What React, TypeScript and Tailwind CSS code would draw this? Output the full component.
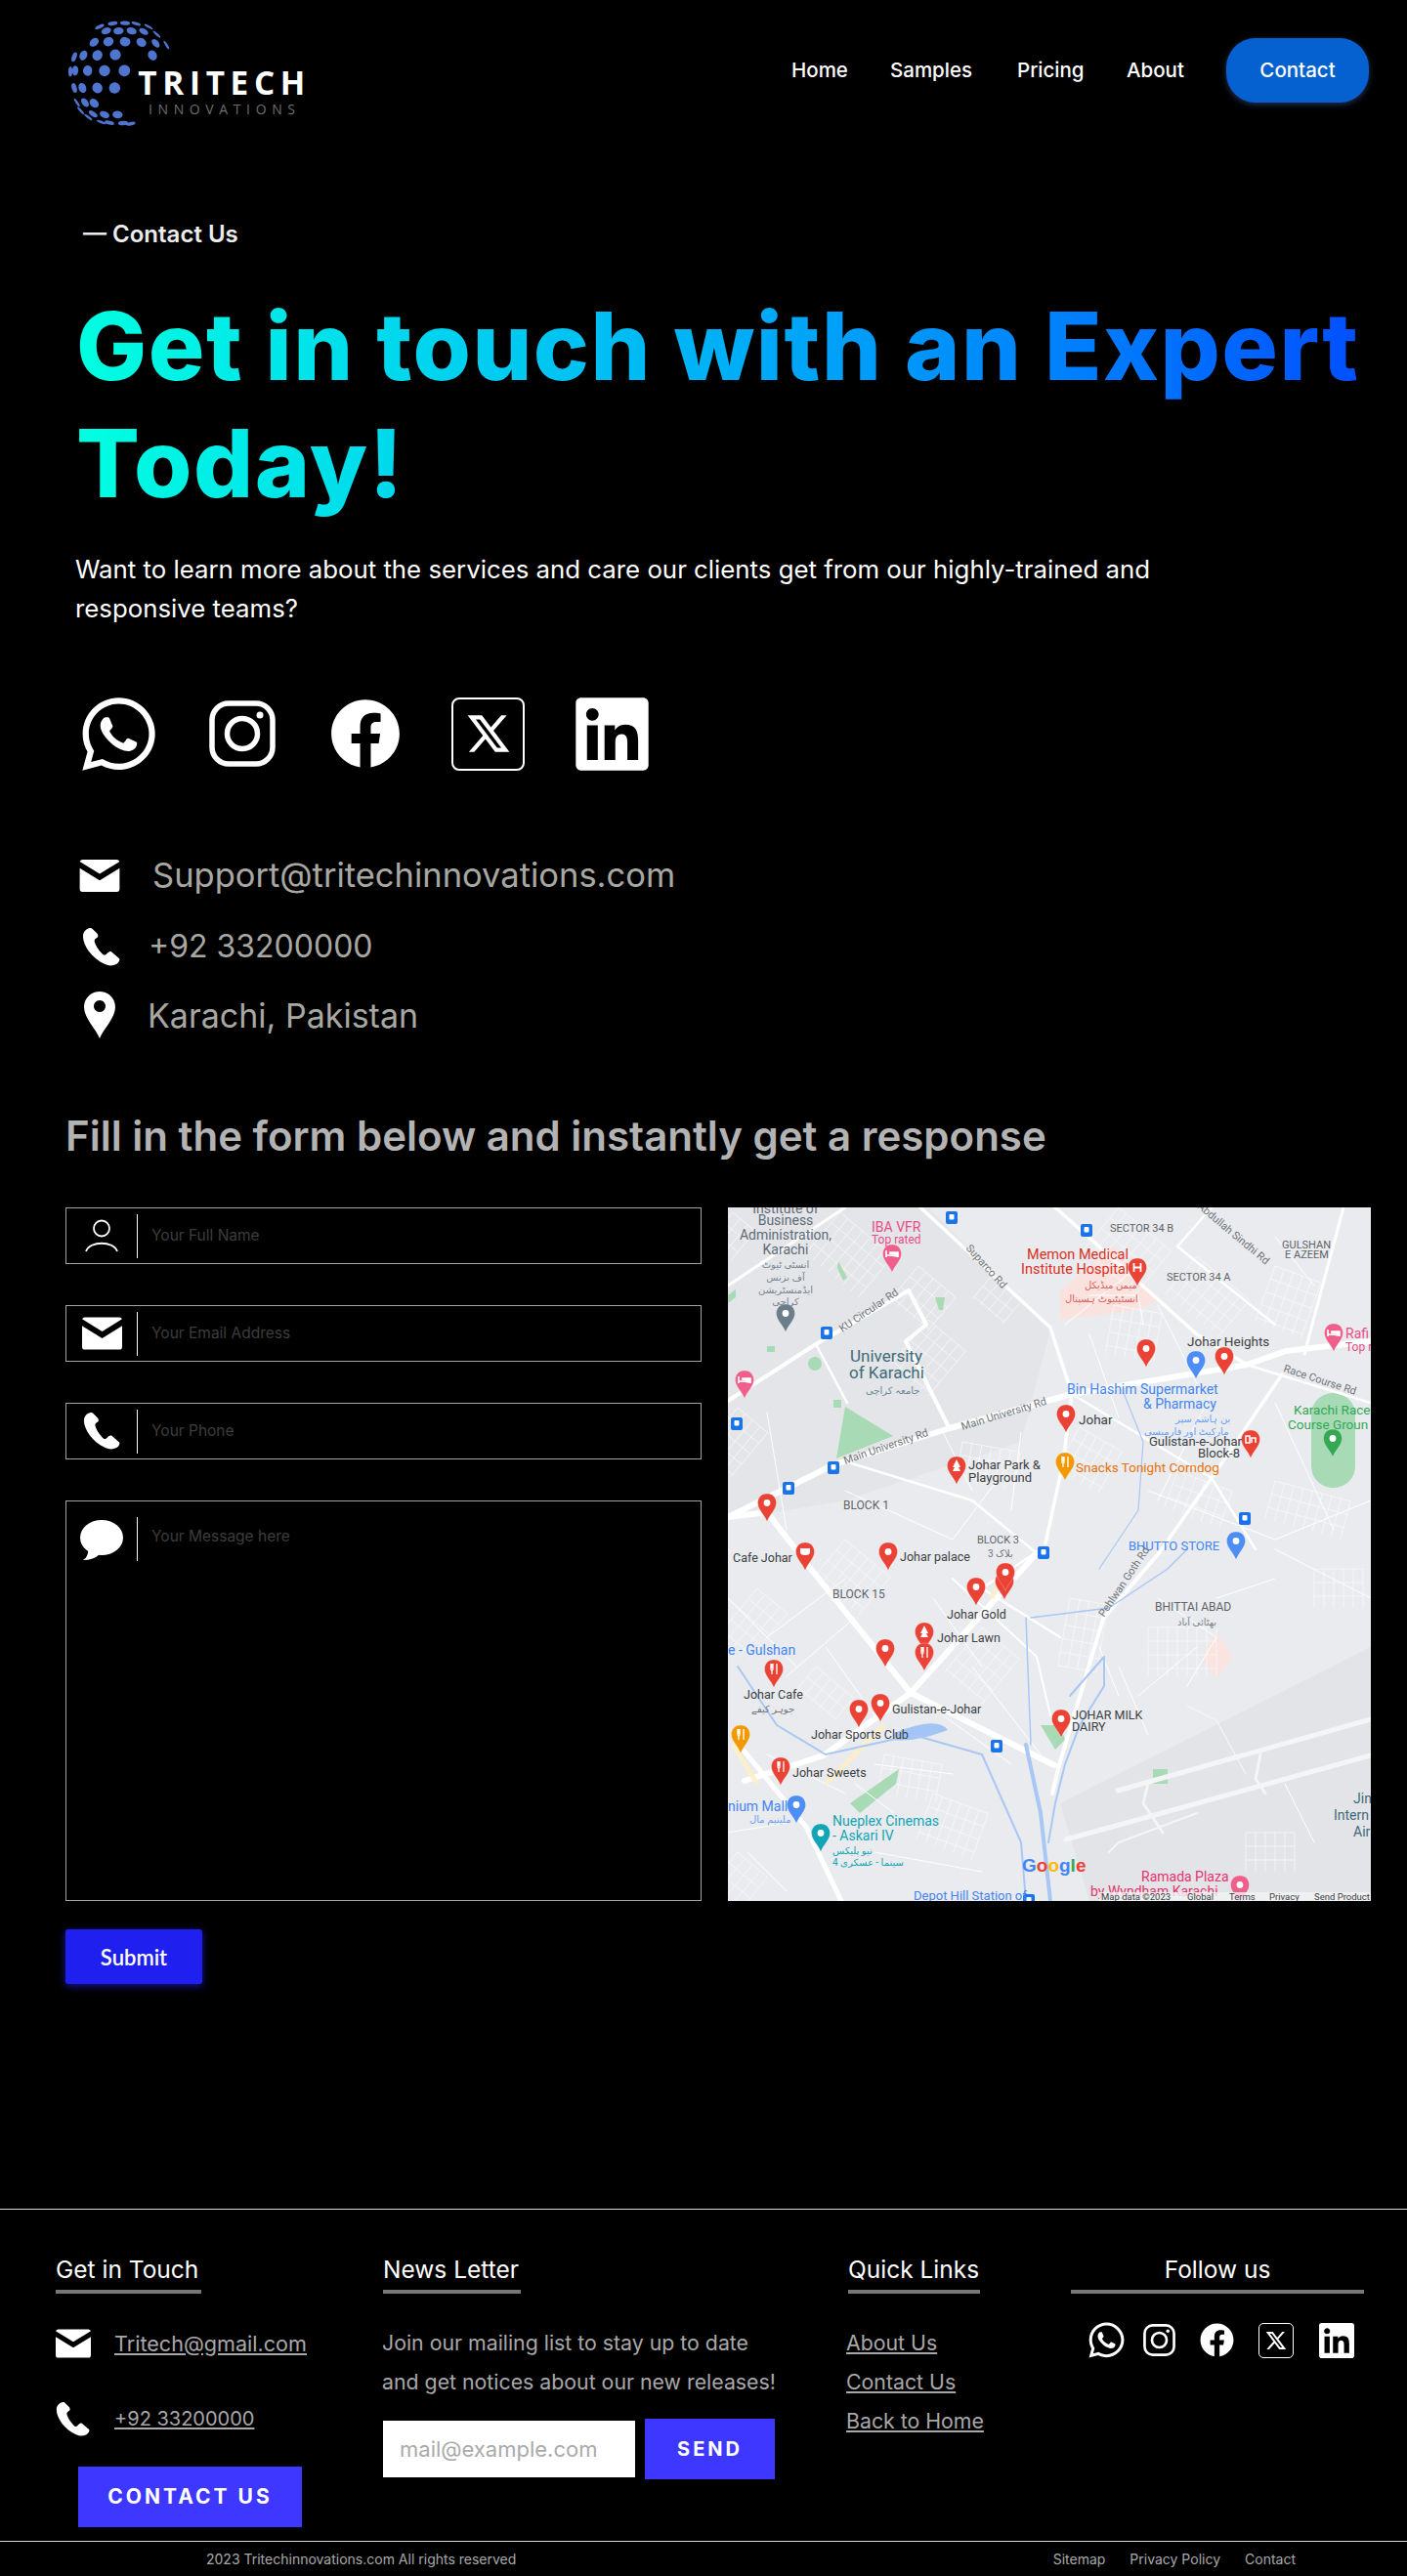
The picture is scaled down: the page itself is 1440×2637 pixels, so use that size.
import React from "react";
import { FaWhatsapp, FaFacebook, FaLinkedin } from "react-icons/fa";
import { RiTwitterXLine } from "react-icons/ri";

const globeDots = [
  [190, 42], [228, 41], [262, 43], [150, 52], [300, 52],
  [170, 65], [208, 65], [248, 65], [285, 67], [325, 75],
  [133, 100], [177, 98], [228, 98], [278, 100], [322, 103], [355, 108],
  [100, 140], [143, 140], [198, 138], [312, 140], [72, 145],
  [75, 187], [113, 187], [165, 187], [226, 187], [60, 190],
  [72, 240], [97, 240], [143, 240], [196, 240],
  [80, 285], [105, 285], [133, 287], [92, 310],
  [130, 320], [165, 322], [205, 322], [115, 330],
  [155, 345], [180, 347], [222, 348], [245, 350],
];

function Logo() {
  const cx = 215;
  const cy = 195;
  const R = 165;
  return (
    <svg width="250" height="112" viewBox="0 0 750 336" className="block">
      <g transform="translate(-48,-30)">
        {globeDots.map(([x, y], i) => {
          const dx = x - cx;
          const dy = y - cy;
          const d = Math.min(Math.sqrt(dx * dx + dy * dy) / R, 0.98);
          const angle = (Math.atan2(dy, dx) * 180) / Math.PI;
          return (
            <ellipse
              key={i}
              cx={x}
              cy={y}
              rx={18 * Math.sqrt(1 - d * d)}
              ry={18 - 3 * d}
              transform={`rotate(${angle} ${x} ${y})`}
              fill="#4f75cf"
            />
          );
        })}
        <text x="268" y="262" fill="#fff" fontFamily="'Open Sans', sans-serif" fontWeight="700" fontSize="100" letterSpacing="12" textLength="525">
          TRITECH
        </text>
        <text x="300" y="320" fill="#6f6f6f" fontFamily="'Open Sans', sans-serif" fontSize="42" textLength="450">
          INNOVATIONS
        </text>
      </g>
    </svg>
  );
}

function InstagramIcon({ className }: { className: string }) {
  return (
    <svg viewBox="0 0 68 68" className={className} fill="none" stroke="#fff" strokeWidth="5.5">
      <rect x="3" y="3" width="62" height="62" rx="17" />
      <circle cx="34" cy="34" r="15.5" />
      <circle cx="52" cy="15" r="3.5" fill="#fff" stroke="none" />
    </svg>
  );
}

function XBox({ className, size }: { className: string; size: string }) {
  return (
    <div className={`flex items-center justify-center border-white ${className}`}>
      <RiTwitterXLine className={`text-white ${size}`} />
    </div>
  );
}

function MailIcon({ className }: { className: string }) {
  return (
    <svg viewBox="0 0 42 34" className={className} fill="#fff">
      <path d="M3 0 H39 Q41 0 42 2 L21 15 L0 2 Q1 0 3 0 Z" />
      <path d="M0 9 L21 22 L42 9 V31 Q42 34 39 34 H3 Q0 34 0 31 Z" />
    </svg>
  );
}

function PhoneIcon({ className }: { className: string }) {
  return (
    <svg viewBox="0 0 40 40" className={className} fill="#fff">
      <path d="M8 0 C4 1 1 4 1 9 C1 18 10 32 24 38 C28 40 32 40 36 38 C39 36 40 33 39 32 L31 25 C29 24 28 25 26 27 C24 29 23 29 21 27 C17 23 14 18 13 14 C13 12 14 11 16 10 C17 9 17 8 16 6 L11 1 C10 0 9 0 8 0 Z" />
    </svg>
  );
}

function PinIcon({ className }: { className: string }) {
  return (
    <svg viewBox="0 0 32 48" className={className} fill="#fff">
      <path
        fillRule="evenodd"
        d="M16 0 C7 0 0 7 0 16 C0 27 12 38 16 48 C20 38 32 27 32 16 C32 7 25 0 16 0 Z M16 9 A6 6 0 1 1 15.99 9 Z"
      />
    </svg>
  );
}

function PersonIcon() {
  return (
    <svg viewBox="0 0 34 34" className="w-[34px] h-[34px]" fill="none" stroke="#fff" strokeWidth="1.8">
      <ellipse cx="17" cy="9.5" rx="8" ry="8" />
      <path d="M1 33 C 5 22, 29 22, 33 33" />
    </svg>
  );
}

function ChatIcon() {
  return (
    <svg viewBox="0 0 44 42" className="w-[44px] h-[42px]" fill="#fff">
      <ellipse cx="22" cy="18" rx="22" ry="18" />
      <path d="M8 28 Q9 38 3 41 Q14 41 20 35 Z" />
    </svg>
  );
}

const mapLabels: [string, number, number, string, number, string?, number?][] = [
  ["Institute of", 59, 6, "#5f6b76", 14, "middle"],
  ["Business", 59, 18, "#5f6b76", 14, "middle"],
  ["Administration,", 59, 33, "#5f6b76", 14, "middle"],
  ["Karachi", 59, 48, "#5f6b76", 14, "middle"],
  ["انسٹی ٹیوٹ", 59, 62, "#7a8590", 10, "middle"],
  ["آف بزنس", 59, 75, "#7a8590", 10, "middle"],
  ["ایڈمنسٹریشن", 59, 88, "#7a8590", 10, "middle"],
  ["کراچی", 59, 100, "#7a8590", 10, "middle"],
  ["IBA VFR", 147, 25, "#ea4c89", 14],
  ["Top rated", 147, 37, "#ea4c89", 12],
  ["SECTOR 34 B", 391, 25, "#5f6368", 11],
  ["GULSHAN", 567, 42, "#5f6368", 11],
  ["E AZEEM", 570, 52, "#5f6368", 11],
  ["SECTOR 34 A", 449, 75, "#5f6368", 11],
  ["Memon Medical", 306, 53, "#d93025", 14.5],
  ["Institute Hospital", 300, 68, "#d93025", 14.5],
  ["میمن میڈیکل", 365, 83, "#e06058", 10],
  ["انسٹیٹیوٹ ہسپتال", 345, 97, "#e06058", 10],
  ["Suparco Rd", 243, 42, "#70757a", 11, "start", 48],
  ["Abdullah Sindhi Rd", 480, 0, "#70757a", 11, "start", 40],
  ["KU Circular Rd", 117, 128, "#70757a", 11, "start", -34],
  ["Johar Heights", 470, 142, "#3c4043", 13.5],
  ["Rafi", 632, 134, "#ea4c89", 14],
  ["Top ra", 632, 147, "#ea4c89", 12],
  ["University", 125, 158, "#3f6b78", 17],
  ["of Karachi", 124, 175, "#3f6b78", 17],
  ["جامعہ کراچی", 141, 191, "#6d8a94", 10],
  ["Race Course Rd", 568, 168, "#70757a", 11, "start", 18],
  ["Bin Hashim Supermarket", 347, 191, "#4285f4", 14],
  ["& Pharmacy", 425, 206, "#4285f4", 14],
  ["بن ہاشم سپر", 458, 220, "#6ea0f5", 10],
  ["مارکیٹ اور فارمیسی", 426, 233, "#6ea0f5", 10],
  ["Main University Rd", 240, 228, "#70757a", 11, "start", -17],
  ["Main University Rd", 120, 263, "#70757a", 11, "start", -19],
  ["Johar", 359, 222, "#3c4043", 13.5],
  ["Karachi Race", 579, 212, "#34a853", 13.5],
  ["Course Groun", 573, 227, "#34a853", 13.5],
  ["Gulistan-e-Johar", 431, 244, "#3c4043", 13],
  ["Block-8", 481, 256, "#3c4043", 13],
  ["Johar Park &", 246, 268, "#3c4043", 13],
  ["Playground", 246, 281, "#3c4043", 13],
  ["Snacks Tonight Corndog", 356, 271, "#e8710a", 13.5],
  ["BLOCK 1", 118, 309, "#5f6368", 12],
  ["BLOCK 3", 255, 344, "#5f6368", 11],
  ["3 بلاک", 266, 358, "#70757a", 10],
  ["Cafe Johar", 5, 363, "#3c4043", 12.5],
  ["Johar palace", 176, 362, "#3c4043", 12.5],
  ["BHUTTO STORE", 410, 351, "#4285f4", 13],
  ["BLOCK 15", 107, 400, "#5f6368", 12],
  ["BHITTAI ABAD", 437, 413, "#5f6368", 12],
  ["بھٹائی آباد", 460, 428, "#80868b", 10],
  ["Pehlwan Goth Rd", 385, 420, "#70757a", 11, "start", -56],
  ["Johar Gold", 224, 421, "#3c4043", 12.5],
  ["Johar Lawn", 214, 445, "#3c4043", 12.5],
  ["e - Gulshan", 0, 458, "#4285f4", 14],
  ["Johar Cafe", 16, 503, "#3c4043", 12.5],
  ["جوہر کیفے", 24, 517, "#70757a", 10],
  ["Gulistan-e-Johar", 168, 518, "#3c4043", 12.5],
  ["JOHAR MILK", 352, 524, "#3c4043", 12.5],
  ["DAIRY", 352, 536, "#3c4043", 12.5],
  ["Johar Sports Club", 85, 544, "#3c4043", 12.5],
  ["Johar Sweets", 66, 583, "#3c4043", 12.5],
  ["nium Mall", 0, 618, "#4285f4", 14],
  ["ملینیم مال", 22, 630, "#6ea0f5", 10],
  ["Nueplex Cinemas", 107, 633, "#12a5b5", 14],
  ["- Askari IV", 107, 648, "#12a5b5", 14],
  ["نیو پلیکس", 107, 662, "#12a5b5", 10],
  ["سینما - عسکری 4", 107, 674, "#12a5b5", 10],
  ["Jin", 640, 610, "#3f6b78", 14],
  ["Intern", 620, 627, "#3f6b78", 14],
  ["Air", 640, 644, "#3f6b78", 14],
  ["Ramada Plaza", 423, 690, "#e8336d", 14],
  ["by Wyndham Karachi", 371, 705, "#e8336d", 14],
  ["Depot Hill Station of", 190, 709, "#4285f4", 13],
];

const mapPins: [number, number, string, string?][] = [
  [168, 51, "#ee5f8b", "bed"], [419, 65, "#ea4335", "H"], [59, 112, "#6b7d88"], [17, 180, "#ee5f8b", "bed"],
  [428, 148, "#ea4335"], [508, 156, "#ea4335"], [479, 160, "#4d8df5"], [620, 132, "#ee5f8b", "bed"],
  [346, 215, "#ea4335"], [234, 268, "#ea4335", "T"], [345, 264, "#f29900", "fork"], [535, 241, "#ea4335", "B"],
  [40, 306, "#ea4335"], [619, 240, "#34a853"], [79, 356, "#ea4335", "cup"], [164, 356, "#ea4335"],
  [520, 345, "#4d8df5"], [254, 392, "#ea4335"], [283, 386, "#ea4335"], [284, 377, "#ea4335"],
  [201, 438, "#ea4335", "T"], [201, 459, "#ea4335", "fork"], [161, 455, "#ea4335"], [47, 476, "#ea4335", "fork"],
  [134, 517, "#ea4335"], [156, 511, "#ea4335"], [341, 527, "#ea4335"], [13, 543, "#f29900", "fork"],
  [54, 576, "#ea4335", "fork"], [70, 615, "#4d8df5"], [95, 644, "#12a5b5"], [524, 697, "#ee5f8b"],
];

const transitStops = [
  [229, 10], [367, 23], [101, 128], [9, 221], [108, 266], [62, 287], [529, 318], [323, 353], [275, 551], [308, 709],
];

const bigRoads: [string, number][] = [
  ["0,317 107,264 227,226 352,191 531,161 571,147 658,137", 6],
  ["197,0 330,123 352,191 343,261 325,344", 3.5],
  ["0,317 40,312 80,364 187,497 334,571", 6],
  ["316,354 187,497 98,561 17,587", 6],
  ["17,557 80,634 116,710", 5],
  ["441,354 384,421 339,571 332,600", 4],
  ["441,354 495,277 567,171", 3.5],
  ["335,0 480,130 531,161", 3.5],
  ["630,0 590,150", 3],
  ["0,80 75,30 120,0", 3],
  ["0,198 90,140 185,85 203,120 182,137 227,227", 4],
  ["90,140 122,200", 2.5],
  ["495,0 460,40 560,120", 2.5],
  ["531,161 658,200", 2.5],
  ["352,191 495,277 540,350", 2.5],
  ["316,354 250,300 120,260", 2.5],
  ["230,380 316,460 330,520", 2],
  ["320,350 260,390 340,440", 2.5],
];

const minorRoads = [
  "370,90 420,90 425,120", "345,120 420,60", "370,130 400,215", "440,100 480,180", "560,30 600,80",
  "500,180 440,300", "560,200 620,330", "430,290 560,340 658,300", "560,350 658,400", "40,210 60,330",
  "120,290 230,340 290,260", "220,230 250,290", "300,230 290,310", "0,400 70,470", "40,440 120,380", "60,480 130,420",
  "100,450 150,520", "210,400 260,470", "250,470 320,560", "220,520 290,570", "380,450 400,500", "440,400 500,440 470,490",
  "420,500 480,450", "40,560 120,600", "150,570 230,580", "0,640 60,630", "130,590 170,620", "500,400 560,380",
  "400,470 430,540", "570,590 600,650", "20,660 60,700", "150,660 260,680",
];

// neighbourhood street patches: x, y, width, height, rotation
const gridPatches = [
  [115, 5, 70, 55, 40], [195, 60, 50, 45, 40], [5, 5, 30, 40, 40], [205, 115, 50, 60, 40], [10, 205, 40, 60, 40],
  [270, 70, 40, 30, 40], [400, 0, 70, 60, 40], [480, 50, 70, 50, 40], [560, 60, 50, 60, 20], [395, 100, 50, 50, 10],
  [240, 240, 60, 40, 10], [360, 225, 50, 50, 30], [460, 270, 60, 40, 20], [560, 280, 80, 40, 15], [120, 340, 60, 50, 40],
  [260, 430, 50, 60, 40], [350, 400, 40, 70, 10], [430, 430, 70, 50, 0], [600, 370, 50, 40, 0], [30, 390, 40, 60, 40],
  [160, 560, 60, 40, 10], [10, 660, 40, 40, 40], [210, 600, 60, 50, 20], [90, 470, 50, 30, 40], [530, 640, 50, 40, 0],
];

function MapPin({ x, y, color, kind }: { x: number; y: number; color: string; kind?: string }) {
  return (
    <g transform={`translate(${x},${y})`}>
      <path d="M0 -13 C 7.5 -13 9.5 -7 9.5 -3.5 C 9.5 3 3 8 0 15.5 C -3 8 -9.5 3 -9.5 -3.5 C -9.5 -7 -7.5 -13 0 -13 Z" fill={color} stroke="#fff" strokeOpacity="0.5" strokeWidth="0.5" />
      {!kind && <circle cx="0" cy="-3.5" r="3.4" fill="#fff" />}
      {kind === "H" && <path d="M-3.5 -8 V1 M3.5 -8 V1 M-3.5 -3.5 H3.5" stroke="#fff" strokeWidth="1.8" />}
      {kind === "bed" && <path d="M-6 -7 V0 M-6 -2 H6 V0 M6 -2 V-5 H-2 V-3" stroke="#fff" strokeWidth="1.6" fill="#fff" />}
      {kind === "fork" && <path d="M-3 -9 V-4 Q-3 -2 -2 -2 V2 M-2 -9 V-4 M-1 -9 V-4 Q-1 -2 -2 -2 M3 -9 V2" stroke="#fff" strokeWidth="1.3" fill="none" />}
      {kind === "T" && <path d="M0 -10 L4 -2 H2 L4 2 H-4 L-2 -2 H-4 Z" fill="#fff" />}
      {kind === "B" && <path d="M-5 0 V-7 H-1 V0 Z M1 0 V-5 H5 V0" stroke="#fff" strokeWidth="1.5" fill="none" />}
      {kind === "cup" && <path d="M-5 -7 H5 V-3 Q5 0 0 0 Q-5 0 -5 -3 Z" fill="#fff" />}
    </g>
  );
}

function StreetGrid({ x, y, w, h, r }: { x: number; y: number; w: number; h: number; r: number }) {
  const lines: string[] = [];
  for (let i = 0; i <= w; i += 10) lines.push(`M${i} 0 V${h}`);
  for (let j = 0; j <= h; j += 14) lines.push(`M0 ${j} H${w}`);
  return <path transform={`translate(${x},${y}) rotate(${r})`} d={lines.join(" ")} stroke="#f6f7f8" strokeWidth="0.8" fill="none" />;
}

function MapView() {
  return (
    <svg viewBox="0 0 658 710" className="w-[658px] h-[710px] block shrink-0" preserveAspectRatio="none">
      <rect width="658" height="710" fill="#e9ebee" />
      <path d="M0 0 H205 L330 125 L300 240 L120 300 L0 320 Z" fill="#e3e5e8" />
      <path d="M340 610 L658 450 V710 H370 Z" fill="#e2e4e7" />
      <path d="M340 85 L395 40 L440 95 L420 105 L340 115 Z" fill="#fae3df" />
      <path d="M485 460 L500 435 L517 460 L500 482 Z" fill="#fbe3e0" />
      {gridPatches.map(([x, y, w, h, r], i) => (
        <StreetGrid key={i} x={x} y={y} w={w} h={h} r={r} />
      ))}
      <path d="M120 204 L169 234 L111 257 Z" fill="#a8dab5" />
      <path d="M113 55 L122 72 L118 75 L112 62 Z" fill="#a8dab5" />
      <path d="M212 92 L222 92 L220 105 L216 105 Z" fill="#a8dab5" />
      <path d="M40 142 H48 V148 H40 Z" fill="#a8dab5" />
      <path d="M108 197 H116 V205 H108 Z" fill="#a8dab5" />
      <path d="M0 90 L8 84 L8 92 L0 98 Z" fill="#a8dab5" />
      <rect x="597" y="190" width="45" height="97" rx="22" fill="#a8dab5" />
      <path d="M125 610 L175 575 L172 590 L135 620 Z" fill="#a8dab5" />
      <path d="M435 575 H450 V590 H435 Z" fill="#a8dab5" />
      <path d="M320 530 L340 530 L345 545 L335 555 Z" fill="#a8dab5" />
      <circle cx="89" cy="160" r="7" fill="#a8dab5" />
      <path d="M170 538 Q215 520 225 535 Q190 548 170 545 Z" fill="#a3c5f5" />
      <g fill="none" stroke="#fff" strokeLinecap="round" strokeLinejoin="round">
        {minorRoads.map((p) => (
          <polyline key={p} points={p} strokeWidth="1" />
        ))}
        {bigRoads.map(([p, w]) => (
          <polyline key={p} points={p} strokeWidth={w} />
        ))}
      </g>
      <g fill="none" stroke="#fdf0c8" strokeWidth="5" opacity="0.9">
        <polyline points="285,365 270,400" />
        <polyline points="160,530 100,590" />
        <polyline points="5,550 30,590" />
      </g>
      <g fill="none" stroke="#a9c7f5" strokeLinecap="round" strokeLinejoin="round">
        <polyline points="10,470 50,530 100,560 190,540 260,560 300,650 305,710" strokeWidth="2" />
        <polyline points="305,550 320,620 330,710" strokeWidth="4" />
        <polyline points="305,420 310,550" strokeWidth="1.5" />
        <polyline points="470,350 450,370 390,410 310,420" strokeWidth="1.5" />
        <polyline points="350,500 385,460 385,490 360,530 345,570 335,610 328,650" strokeWidth="2" />
        <polyline points="405,190 425,240 420,310 380,370" strokeWidth="1.2" />
      </g>
      <g fill="none" stroke="#f4f5f6" strokeLinecap="round" strokeLinejoin="round">
        <polyline points="399,597 658,524" strokeWidth="5" />
        <polyline points="346,647 658,561" strokeWidth="5" />
        <polyline points="430,590 425,610 445,640" strokeWidth="3" />
        <polyline points="545,560 540,585 550,600" strokeWidth="3" />
        <polyline points="390,660 400,650 480,620" strokeWidth="2" />
        <polyline points="470,510 500,525 530,580" strokeWidth="1.2" />
      </g>
      {transitStops.map(([x, y], i) => (
        <g key={i}>
          <rect x={x - 6} y={y - 6} width="12" height="13" rx="2" fill="#1a73e8" />
          <rect x={x - 2.5} y={y - 3} width="5" height="5.5" rx="1" fill="#fff" />
        </g>
      ))}
      {mapPins.map(([x, y, c, k], i) => (
        <MapPin key={i} x={x} y={y} color={c} kind={k} />
      ))}
      <g fontFamily="Roboto, 'DejaVu Sans', sans-serif">
        {mapLabels.map(([t, x, y, c, s, a, r], i) => (
          <text
            key={i}
            x={x}
            y={y}
            fill={c}
            fontSize={s}
            textAnchor={(a as "middle" | "start") || "start"}
            transform={r ? `rotate(${r} ${x} ${y})` : undefined}
          >
            {t}
          </text>
        ))}
      </g>
      <text x="301" y="680" fontFamily="'Liberation Sans', sans-serif" fontSize="19" fontWeight="700">
        <tspan fill="#4285f4">G</tspan>
        <tspan fill="#ea4335">o</tspan>
        <tspan fill="#fbbc05">o</tspan>
        <tspan fill="#4285f4">g</tspan>
        <tspan fill="#34a853">l</tspan>
        <tspan fill="#ea4335">e</tspan>
      </text>
      <rect x="380" y="701" width="278" height="9" fill="#f1f3f4" opacity="0.8" />
      <g fontFamily="Roboto, sans-serif" fontSize="9.5" fill="#3c4043">
        <text x="382" y="709">Map data ©2023</text>
        <text x="470" y="709">Global</text>
        <text x="513" y="709">Terms</text>
        <text x="554" y="709">Privacy</text>
        <text x="600" y="709">Send Product</text>
      </g>
    </svg>
  );
}

function Field({ icon, placeholder, type = "text" }: { icon: React.ReactNode; placeholder: string; type?: string }) {
  return (
    <div className="flex items-center w-[651px] h-[58px] border border-[#a3a3a3]">
      <div className="flex items-center justify-center w-[72px] shrink-0">{icon}</div>
      <div className="w-px h-[45px] bg-white" />
      <input
        type={type}
        placeholder={placeholder}
        className="flex-1 ml-[14px] bg-transparent outline-none text-[15.5px] text-white placeholder:text-[#3d3d3d]"
      />
    </div>
  );
}

function FooterHeading({ children, className = "" }: { children: string; className?: string }) {
  return (
    <h3 className={`h-[41px] border-b-4 border-[#777] text-white text-[24.5px] leading-[32px] whitespace-nowrap ${className}`}>
      {children}
    </h3>
  );
}

function App() {
  return (
    <div className="bg-black w-full h-[2637px] overflow-hidden font-['Inter',sans-serif]">
      <header className="flex justify-between items-start pl-[68px] pr-[39px] pt-[20px] h-[130px]">
        <Logo />
        <nav className="flex items-center mt-[19px] text-white text-[20.5px] font-medium">
          <a className="w-[60px] whitespace-nowrap">Home</a>
          <a className="ml-[41px] w-[89px] whitespace-nowrap">Samples</a>
          <a className="ml-[41px] w-[70px] whitespace-nowrap">Pricing</a>
          <a className="ml-[42px] w-[60px] whitespace-nowrap">About</a>
          <a className="ml-[42px] flex items-center justify-center w-[146px] h-[66px] rounded-[30px] bg-[#0560d0] shadow-[0_2px_6px_rgba(80,110,200,0.45)]">
            Contact
          </a>
        </nav>
      </header>

      <main className="pl-[67px]">
        <p className="mt-[94px] ml-[18px] text-[#ececec] text-[24px] font-semibold leading-[32px] whitespace-nowrap">— Contact Us</p>
        <h1 className="mt-[38px] ml-[11px] w-[1310px] text-[96px] font-extrabold leading-[120px] tracking-[1.5px] bg-linear-to-r from-[#00ffe0] to-[#0050ff] bg-clip-text text-transparent whitespace-nowrap">
          Get in touch with an Expert
          <br />
          Today!
        </h1>
        <p className="mt-[29px] ml-[10px] w-[1200px] text-white text-[25.8px] leading-[40px] whitespace-nowrap">
          Want to learn more about the services and care our clients get from our highly-trained and
          <br />
          responsive teams?
        </p>

        <div className="flex items-center mt-[70px] ml-[12px] h-[76px]">
          <FaWhatsapp className="text-white w-[85px] h-[85px]" />
          <InstagramIcon className="ml-[50px] w-[68px] h-[68px]" />
          <FaFacebook className="ml-[56px] text-white w-[72px] h-[72px]" />
          <XBox className="ml-[52px] w-[75px] h-[75px] border-2 rounded-[8px]" size="w-[50px] h-[50px]" />
          <FaLinkedin className="ml-[52px] text-white w-[75px] h-[85px]" />
        </div>

        <div className="text-[#a8a8a3]">
          <div className="flex items-center h-[40px] mt-[87px]">
            <MailIcon className="ml-[14px] w-[42px] h-[33px]" />
            <span className="ml-[33px] text-[34.5px]">Support@tritechinnovations.com</span>
          </div>
          <div className="flex items-center h-[40px] mt-[33px]">
            <PhoneIcon className="ml-[17px] w-[39px] h-[39px]" />
            <span className="ml-[29px] text-[32px]">+92 33200000</span>
          </div>
          <div className="flex items-center h-[40px] mt-[30px]">
            <PinIcon className="ml-[19px] w-[32px] h-[48px]" />
            <span className="ml-[33px] text-[34px]">Karachi, Pakistan</span>
          </div>
        </div>

        <h2 className="mt-[81px] text-[#b3b3b3] text-[42px] font-semibold leading-[46px] whitespace-nowrap">
          Fill in the form below and instantly get a response
        </h2>

        <div className="flex mt-[50px]">
          <div className="flex flex-col gap-[42px] w-[651px]">
            <Field icon={<PersonIcon />} placeholder="Your Full Name" />
            <Field icon={<MailIcon className="w-[41px] h-[34px]" />} placeholder="Your Email Address" type="email" />
            <Field icon={<PhoneIcon className="w-[38px] h-[38px]" />} placeholder="Your Phone" />
            <div className="flex w-[651px] h-[410px] border border-[#a3a3a3]">
              <div className="flex justify-center w-[72px] shrink-0 pt-[19px]">
                <ChatIcon />
              </div>
              <div className="w-px h-[45px] mt-[16px] bg-white" />
              <textarea
                placeholder="Your Message here"
                className="flex-1 ml-[14px] pt-[24px] bg-transparent outline-none resize-none text-[15.5px] text-white placeholder:text-[#3d3d3d]"
              />
            </div>
          </div>
          <div className="ml-[27px]">
            <MapView />
          </div>
        </div>

        <button className="block mt-[29px] w-[140px] h-[56px] rounded-[3px] bg-[#1f1ff0] text-white text-[22px] font-semibold font-['Lato',sans-serif] shadow-[0_2px_8px_rgba(40,40,255,0.6)]">
          Submit
        </button>
      </main>

      <footer className="mt-[230px] border-t border-[#d8d8d8]">
        <div className="flex pl-[57px] pt-[45px] h-[339px]">
          <div className="w-[335px]">
            <FooterHeading className="w-[149px]">Get in Touch</FooterHeading>
            <div className="flex items-center h-[32px] mt-[35px]">
              <MailIcon className="w-[36px] h-[30px]" />
              <a className="ml-[24px] text-[#a8a8a8] text-[21.6px] underline underline-offset-2">Tritech@gmail.com</a>
            </div>
            <div className="flex items-center h-[36px] mt-[43px]">
              <PhoneIcon className="w-[35px] h-[35px]" />
              <a className="ml-[25px] text-[#a8a8a8] text-[20px] underline underline-offset-2">+92 33200000</a>
            </div>
            <button className="block mt-[31px] ml-[23px] w-[229px] h-[62px] bg-[#3d37ff] text-white text-[21px] font-bold tracking-[3px]">
              CONTACT US
            </button>
          </div>
          <div className="w-[474px]">
            <FooterHeading className="w-[141px]">News Letter</FooterHeading>
            <p className="mt-[30px] -ml-px w-[420px] text-[#a8a8a8] text-[21.3px] leading-[40px] whitespace-nowrap">
              Join our mailing list to stay up to date
              <br />
              and get notices about our new releases!
            </p>
            <div className="flex items-center mt-[18px]">
              <input
                placeholder="mail@example.com"
                className="w-[258px] h-[58px] px-[17px] bg-white outline-none text-[22px] placeholder:text-[#aaa]"
              />
              <button className="ml-[10px] w-[133px] h-[62px] bg-[#3d37ff] text-white text-[20px] font-bold tracking-[3px]">SEND</button>
            </div>
          </div>
          <div className="w-[230px]">
            <FooterHeading className="ml-[2px] w-[135px]">Quick Links</FooterHeading>
            <ul className="mt-[30px] text-[#a8a8a8] text-[21.3px] leading-[40px] underline underline-offset-2">
              <li>About Us</li>
              <li>Contact Us</li>
              <li>Back to Home</li>
            </ul>
          </div>
          <div className="w-[300px]">
            <FooterHeading className="w-[300px] text-center">Follow us</FooterHeading>
            <div className="flex items-center mt-[29px] ml-[16px] h-[37px]">
              <FaWhatsapp className="text-white w-[41px] h-[41px]" />
              <InstagramIcon className="ml-[17px] w-[33px] h-[33px]" />
              <FaFacebook className="ml-[25px] text-white w-[35px] h-[35px]" />
              <XBox className="ml-[25px] w-[36px] h-[36px] border rounded-[5px]" size="w-[24px] h-[24px]" />
              <FaLinkedin className="ml-[26px] text-white w-[36px] h-[42px]" />
            </div>
          </div>
        </div>
        <div className="flex justify-between items-center h-[36px] border-t border-[#d8d8d8] pl-[211px] pr-[114px] text-[#aaa] text-[14px]">
          <span>2023 Tritechinnovations.com All rights reserved</span>
          <div className="flex gap-[25px]">
            <a>Sitemap</a>
            <a>Privacy Policy</a>
            <a>Contact</a>
          </div>
        </div>
      </footer>
    </div>
  );
}

export default App;
